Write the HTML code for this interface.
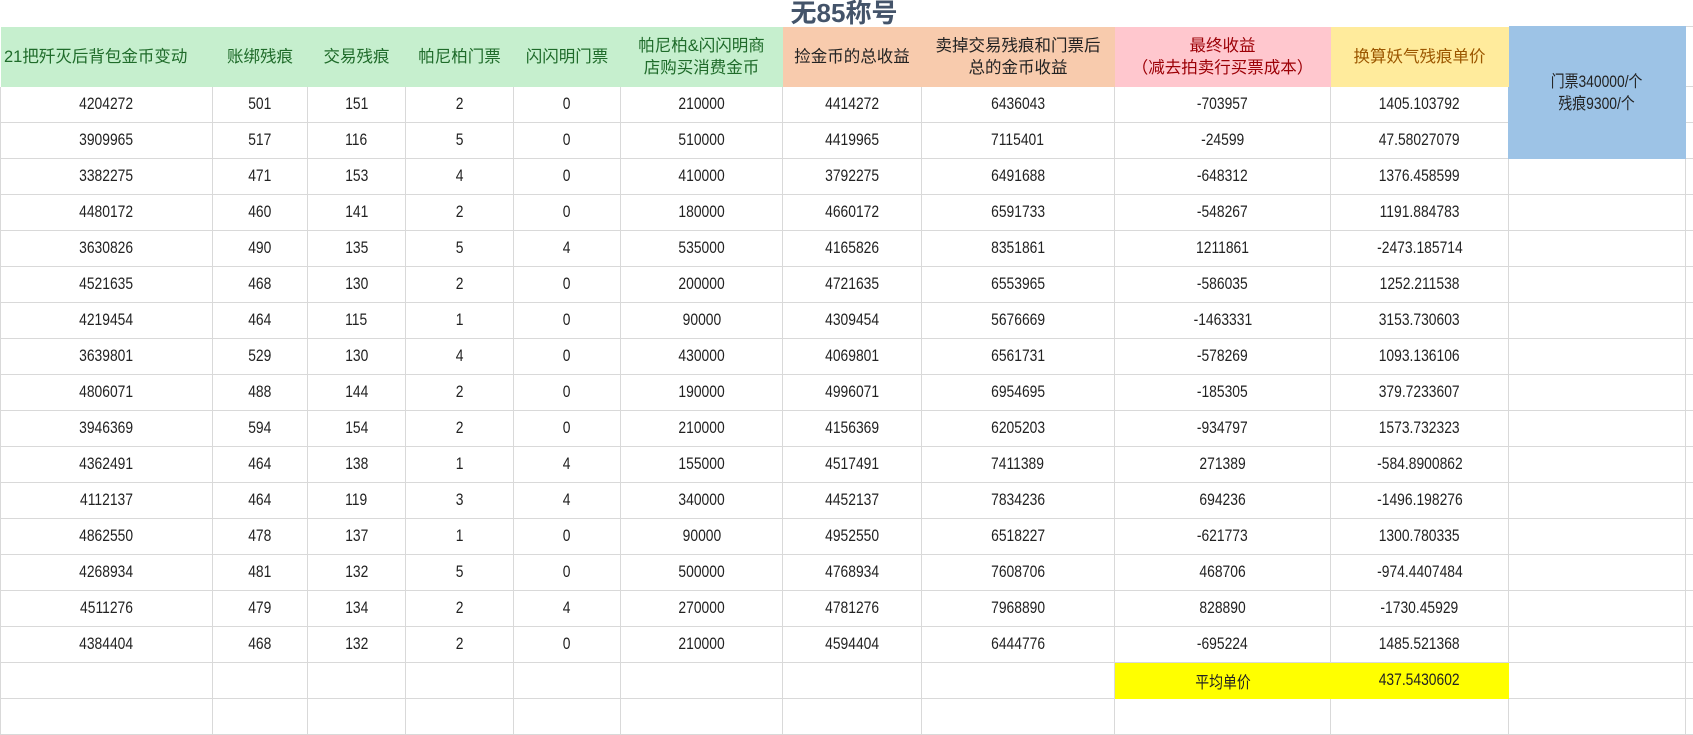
<!DOCTYPE html>
<html><head><meta charset="utf-8"><style>
body{margin:0;width:1693px;height:713px;overflow:hidden;background:#fff;font-family:"Liberation Sans","Noto Sans CJK SC",sans-serif;}
.t{position:absolute;left:0;top:0;width:1688px;height:26px;text-align:center;font:bold 26px/26px "Liberation Sans","Noto Sans CJK SC",sans-serif;color:#44546a;}
table{position:absolute;left:0;top:26px;border-collapse:collapse;table-layout:fixed;width:1693px;}
td{border:1px solid #d9d9d9;height:35px;padding:0;text-align:center;font-size:16.5px;color:#222;white-space:nowrap;overflow:visible;}
td i{font-style:normal;display:inline-block;transform:scaleX(.84);}
tr.h td{height:59px;font-size:16.5px;line-height:22px;border-color:transparent;}
.g{background:#c6efce;color:#1f6b2a;}
.o{background:#f8cbad;color:#222;}
.p{background:#ffc7ce;color:#9c0006;}
.y{background:#ffeb9c;color:#9c5700;}
.b{background:#9dc3e6;color:#222;line-height:24px;border-color:#9dc3e6 !important;}
.ye{background:#ffff00;border-color:#ffff00;}
</style></head><body>
<div class="t">无85称号</div>
<table>
<colgroup><col style="width:212px"><col style="width:95px"><col style="width:98px"><col style="width:108px"><col style="width:107px"><col style="width:162px"><col style="width:139px"><col style="width:193px"><col style="width:216px"><col style="width:178px"><col style="width:177px"><col style="width:8px"></colgroup>
<tr class="h"><td class="g" style="text-align:left;padding-left:3px">21把歼灭后背包金币变动</td><td class="g">账绑残痕</td><td class="g">交易残痕</td><td class="g">帕尼柏门票</td><td class="g">闪闪明门票</td><td class="g">帕尼柏&amp;闪闪明商<br>店购买消费金币</td><td class="o">捡金币的总收益</td><td class="o">卖掉交易残痕和门票后<br>总的金币收益</td><td class="p">最终收益<br>（减去拍卖行买票成本）</td><td class="y">换算妖气残痕单价</td><td class="b" rowspan="3"><i>门票340000/个<br>残痕9300/个</i></td><td style="border-color:#d9d9d9"></td></tr>
<tr><td><i>4204272</i></td><td><i>501</i></td><td><i>151</i></td><td><i>2</i></td><td><i>0</i></td><td><i>210000</i></td><td><i>4414272</i></td><td><i>6436043</i></td><td><i>-703957</i></td><td><i>1405.103792</i></td><td></td></tr>
<tr><td><i>3909965</i></td><td><i>517</i></td><td><i>116</i></td><td><i>5</i></td><td><i>0</i></td><td><i>510000</i></td><td><i>4419965</i></td><td><i>7115401</i></td><td><i>-24599</i></td><td><i>47.58027079</i></td><td></td></tr>
<tr><td><i>3382275</i></td><td><i>471</i></td><td><i>153</i></td><td><i>4</i></td><td><i>0</i></td><td><i>410000</i></td><td><i>3792275</i></td><td><i>6491688</i></td><td><i>-648312</i></td><td><i>1376.458599</i></td><td></td><td></td></tr>
<tr><td><i>4480172</i></td><td><i>460</i></td><td><i>141</i></td><td><i>2</i></td><td><i>0</i></td><td><i>180000</i></td><td><i>4660172</i></td><td><i>6591733</i></td><td><i>-548267</i></td><td><i>1191.884783</i></td><td></td><td></td></tr>
<tr><td><i>3630826</i></td><td><i>490</i></td><td><i>135</i></td><td><i>5</i></td><td><i>4</i></td><td><i>535000</i></td><td><i>4165826</i></td><td><i>8351861</i></td><td><i>1211861</i></td><td><i>-2473.185714</i></td><td></td><td></td></tr>
<tr><td><i>4521635</i></td><td><i>468</i></td><td><i>130</i></td><td><i>2</i></td><td><i>0</i></td><td><i>200000</i></td><td><i>4721635</i></td><td><i>6553965</i></td><td><i>-586035</i></td><td><i>1252.211538</i></td><td></td><td></td></tr>
<tr><td><i>4219454</i></td><td><i>464</i></td><td><i>115</i></td><td><i>1</i></td><td><i>0</i></td><td><i>90000</i></td><td><i>4309454</i></td><td><i>5676669</i></td><td><i>-1463331</i></td><td><i>3153.730603</i></td><td></td><td></td></tr>
<tr><td><i>3639801</i></td><td><i>529</i></td><td><i>130</i></td><td><i>4</i></td><td><i>0</i></td><td><i>430000</i></td><td><i>4069801</i></td><td><i>6561731</i></td><td><i>-578269</i></td><td><i>1093.136106</i></td><td></td><td></td></tr>
<tr><td><i>4806071</i></td><td><i>488</i></td><td><i>144</i></td><td><i>2</i></td><td><i>0</i></td><td><i>190000</i></td><td><i>4996071</i></td><td><i>6954695</i></td><td><i>-185305</i></td><td><i>379.7233607</i></td><td></td><td></td></tr>
<tr><td><i>3946369</i></td><td><i>594</i></td><td><i>154</i></td><td><i>2</i></td><td><i>0</i></td><td><i>210000</i></td><td><i>4156369</i></td><td><i>6205203</i></td><td><i>-934797</i></td><td><i>1573.732323</i></td><td></td><td></td></tr>
<tr><td><i>4362491</i></td><td><i>464</i></td><td><i>138</i></td><td><i>1</i></td><td><i>4</i></td><td><i>155000</i></td><td><i>4517491</i></td><td><i>7411389</i></td><td><i>271389</i></td><td><i>-584.8900862</i></td><td></td><td></td></tr>
<tr><td><i>4112137</i></td><td><i>464</i></td><td><i>119</i></td><td><i>3</i></td><td><i>4</i></td><td><i>340000</i></td><td><i>4452137</i></td><td><i>7834236</i></td><td><i>694236</i></td><td><i>-1496.198276</i></td><td></td><td></td></tr>
<tr><td><i>4862550</i></td><td><i>478</i></td><td><i>137</i></td><td><i>1</i></td><td><i>0</i></td><td><i>90000</i></td><td><i>4952550</i></td><td><i>6518227</i></td><td><i>-621773</i></td><td><i>1300.780335</i></td><td></td><td></td></tr>
<tr><td><i>4268934</i></td><td><i>481</i></td><td><i>132</i></td><td><i>5</i></td><td><i>0</i></td><td><i>500000</i></td><td><i>4768934</i></td><td><i>7608706</i></td><td><i>468706</i></td><td><i>-974.4407484</i></td><td></td><td></td></tr>
<tr><td><i>4511276</i></td><td><i>479</i></td><td><i>134</i></td><td><i>2</i></td><td><i>4</i></td><td><i>270000</i></td><td><i>4781276</i></td><td><i>7968890</i></td><td><i>828890</i></td><td><i>-1730.45929</i></td><td></td><td></td></tr>
<tr><td><i>4384404</i></td><td><i>468</i></td><td><i>132</i></td><td><i>2</i></td><td><i>0</i></td><td><i>210000</i></td><td><i>4594404</i></td><td><i>6444776</i></td><td><i>-695224</i></td><td><i>1485.521368</i></td><td></td><td></td></tr>
<tr><td></td><td></td><td></td><td></td><td></td><td></td><td></td><td></td><td class="ye"><i>平均单价</i></td><td class="ye"><i>437.5430602</i></td><td></td><td></td></tr>
<tr><td></td><td></td><td></td><td></td><td></td><td></td><td></td><td></td><td></td><td></td><td></td><td></td></tr>
</table>
</body></html>
